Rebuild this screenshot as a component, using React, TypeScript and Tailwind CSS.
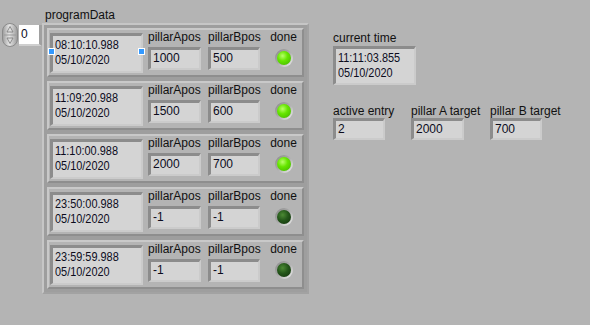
import React from "react";

const font = { fontFamily: '"Liberation Sans", Arial, sans-serif' };

type Row = { time: string; date: string; a: string; b: string; done: boolean; handles?: boolean };

const rows: Row[] = [
  { time: "08:10:10.988", date: "05/10/2020", a: "1000", b: "500", done: true, handles: true },
  { time: "11:09:20.988", date: "05/10/2020", a: "1500", b: "600", done: true },
  { time: "11:10:00.988", date: "05/10/2020", a: "2000", b: "700", done: true },
  { time: "23:50:00.988", date: "05/10/2020", a: "-1", b: "-1", done: false },
  { time: "23:59:59.988", date: "05/10/2020", a: "-1", b: "-1", done: false },
];

function Box({ children, className = "" }: { children: React.ReactNode; className?: string }) {
  return (
    <div
      className={
        "border-t-[3px] border-l-[3px] border-b-2 border-r-2 border-t-[#8c8c8c] border-l-[#8c8c8c] border-b-[#cbcbcb] border-r-[#cbcbcb] bg-[#d4d4d4] text-[#0c0c1c] " +
        className
      }
    >
      {children}
    </div>
  );
}

function Stamp({ time, date }: { time: string; date: string }) {
  return (
    <div className="origin-left scale-x-[0.84] text-[13px] leading-[15px] whitespace-nowrap">
      <div>{time}</div>
      <div>{date}</div>
    </div>
  );
}

function Led({ on }: { on: boolean }) {
  return (
    <div className="w-[18px] h-[18px] rounded-full bg-[linear-gradient(135deg,#8a8a8a_0%,#a8a8a8_45%,#f2f2f2_100%)] flex items-center justify-center">
      <div
        className={
          "w-[14px] h-[14px] rounded-full " +
          (on
            ? "bg-[radial-gradient(circle_at_40%_35%,#b9ff6a_0%,#66e600_40%,#3fae00_100%)]"
            : "bg-[radial-gradient(circle_at_40%_35%,#4c8a34_0%,#24561a_45%,#0f2e09_100%)]")
        }
      />
    </div>
  );
}

function Cluster({ r }: { r: Row }) {
  return (
    <div className="h-[49px] border-2 border-t-[#c9c9c9] border-l-[#c9c9c9] border-b-[#8e8e8e] border-r-[#8e8e8e] bg-[#b4b4b4] flex">
      <div className="relative ml-[1px] mt-[3px]">
        <Box className="w-[93px] h-[40px] pl-[2px] pt-[1px]">
          <Stamp time={r.time} date={r.date} />
        </Box>
        {r.handles && (
          <>
            <div className="absolute left-[-2px] top-[15px] w-[7px] h-[7px] bg-[#3399ff] border border-white" />
            <div className="absolute left-[88px] top-[15px] w-[7px] h-[7px] bg-[#3399ff] border border-white" />
          </>
        )}
      </div>
      <div className="ml-[5px] w-[53px] flex flex-col">
        <div className="text-[12px] leading-[14px] text-[#111] whitespace-nowrap">pillarApos</div>
        <Box className="mt-[3px] h-[23px] pl-[2px] text-[12px] leading-[17px]">{r.a}</Box>
      </div>
      <div className="ml-[7px] w-[52px] flex flex-col">
        <div className="text-[12px] leading-[14px] text-[#111] whitespace-nowrap">pillarBpos</div>
        <Box className="mt-[3px] h-[23px] pl-[2px] text-[12px] leading-[17px]">{r.b}</Box>
      </div>
      <div className="ml-[10px] w-[27px] flex flex-col items-center">
        <div className="text-[12px] leading-[14px] text-[#111]">done</div>
        <div className="mt-[5px]">
          <Led on={r.done} />
        </div>
      </div>
    </div>
  );
}

function Spinner() {
  return (
    <svg width="16" height="24" viewBox="0 0 16 24">
      <defs>
        <linearGradient id="sp" x1="0" y1="0" x2="1" y2="0">
          <stop offset="0" stopColor="#9a9a9a" />
          <stop offset="0.45" stopColor="#e6e6e6" />
          <stop offset="1" stopColor="#9a9a9a" />
        </linearGradient>
      </defs>
      <rect x="0.5" y="0.5" width="15" height="23" rx="7.5" fill="url(#sp)" stroke="#8a8a8a" />
      <line x1="2" y1="12" x2="14" y2="12" stroke="#9a9a9a" />
      <path d="M8 3.5 L11 9 L5 9 Z" fill="#dcdcdc" stroke="#7a7a7a" strokeWidth="0.8" />
      <path d="M8 20.5 L11 15 L5 15 Z" fill="#dcdcdc" stroke="#7a7a7a" strokeWidth="0.8" />
    </svg>
  );
}

export default function App() {
  return (
    <div className="w-[590px] h-[325px] bg-[#b4b4b4] overflow-hidden flex" style={font}>
      <div className="pl-[2px] pt-[8px] flex flex-col">
        <div className="ml-[43px] text-[12px] leading-[14px] text-[#111]">programData</div>
        <div className="mt-[1px] flex items-start">
          <div className="flex items-start w-[40px]">
            <Spinner />
            <div className="ml-[1px] mt-[2px] border-r-[3px] border-b-[2px] border-r-[#a0a0a0] border-b-[#cfcfcf]">
              <div className="w-[20px] h-[19px] bg-white pl-[2px] text-[12px] leading-[19px] text-[#0c0c1c]">0</div>
            </div>
          </div>
          <div className="w-[267px] h-[271px] border-2 border-t-[#c6c6c6] border-l-[#c6c6c6] border-b-[#a2a2a2] border-r-[#a2a2a2] bg-[#9e9e9e] p-[3px] flex flex-col gap-[4px]">
            {rows.map((r, i) => (
              <Cluster key={i} r={r} />
            ))}
          </div>
        </div>
      </div>
      <div className="ml-[24px] pt-[31px] flex flex-col">
        <div className="text-[12px] leading-[14px] text-[#111]">current time</div>
        <Box className="mt-[1px] w-[83px] h-[39px] pl-[2px] pt-[1px]">
          <Stamp time="11:11:03.855" date="05/10/2020" />
        </Box>
        <div className="mt-[19px] flex">
          <div className="w-[78px]">
            <div className="text-[12px] leading-[14px] text-[#111] whitespace-nowrap">active entry</div>
            <Box className="w-[52px] h-[22px] pl-[2px] text-[12px] leading-[17px]">2</Box>
          </div>
          <div className="w-[79px]">
            <div className="text-[12px] leading-[14px] text-[#111] whitespace-nowrap">pillar A target</div>
            <Box className="w-[53px] h-[22px] pl-[2px] text-[12px] leading-[17px]">2000</Box>
          </div>
          <div>
            <div className="text-[12px] leading-[14px] text-[#111] whitespace-nowrap">pillar B target</div>
            <Box className="w-[52px] h-[22px] pl-[2px] text-[12px] leading-[17px]">700</Box>
          </div>
        </div>
      </div>
    </div>
  );
}
